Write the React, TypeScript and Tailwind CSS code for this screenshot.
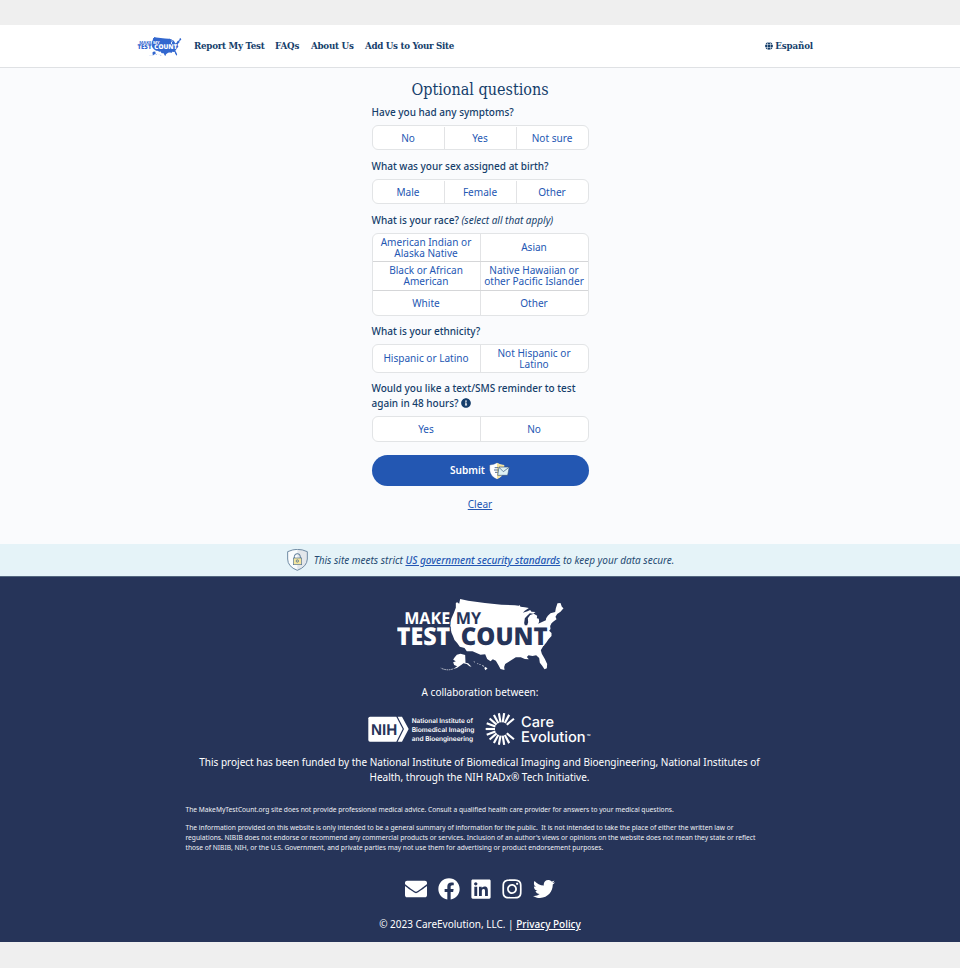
import React from "react";
import { FaEnvelope, FaFacebook, FaLinkedin, FaInstagram, FaTwitter, FaGlobe, FaInfoCircle } from "react-icons/fa";

const SANS = "font-['Noto_Sans',sans-serif]";
const SLAB = "font-['DejaVu_Serif_Condensed','DejaVu_Serif',serif] [font-stretch:condensed]";

function MapLogo({ className, ink, paper }: { className: string; ink: string; paper: string }) {
  const text = { fontFamily: "'Open Sans', sans-serif", strokeLinejoin: "round" as const, paintOrder: "stroke", textRendering: "geometricPrecision" as const };
  return (
    <svg className={className} viewBox="37 26 500 216" aria-label="Make My Test Count">
      <path
        fill={ink}
        d="M213 38L217 36L223 40L226 26L250 31L300 38L350 43L390 45L402 46L404 44L407 49L420 51L432 53L420 61L414 67L428 63L436 59L440 64L452 65L445 70L435 69L427 76L420 84L418 98L420 105L427 105L430 96L429 84L436 74L447 70L457 76L456 84L462 85L463 94L460 100L470 96L483 90L484 84L489 76L497 69L511 65L513 54L518 39L527 38L531 49L536 54L527 64L517 71L512 79L515 87L505 94L500 99L496 107L497 116L493 121L500 128L500 137L491 147L484 157L475 168L468 180L471 190L480 206L487 221L486 234L479 237L472 226L465 217L463 203L454 195L443 197L431 195L426 200L432 207L420 206L408 201L393 201L380 209L361 221L358 230L359 239L347 236L341 225L333 211L324 207L317 213L307 206L301 192L287 193L263 183L246 183L239 173L225 169L217 158L209 149L204 136L200 127L197 113L196 98L200 84L207 68L213 52Z"
      />
      <path
        fill={ink}
        d="M208 203L216 193L227 190L241 194L242 217L250 219L260 229L254 228L246 221L236 219L228 225L216 233L205 236L217 228L208 224L205 216L213 213L205 208Z"
      />
      <path fill="none" stroke={ink} strokeWidth="2" strokeDasharray="5 2" d="M204 236Q185 242 168 233" />
      <path fill={ink} d="M266 213l4 1-1 3zM276 218l5 2-2 2zM283 221l6 2-4 1zM291 224l7 3-3 2zM300 229l8 5-6 6-3-5z" />
      <g {...text} fontWeight="700">
        <text x="58" y="101" fontSize="49" textLength="138" lengthAdjust="spacingAndGlyphs" fill={ink} stroke={paper} strokeWidth="6">MAKE</text>
        <text x="213" y="101" fontSize="49" textLength="76" lengthAdjust="spacingAndGlyphs" fill={paper}>MY</text>
      </g>
      <g {...text} fontWeight="800">
        <text x="36" y="164" fontSize="74" textLength="160" lengthAdjust="spacingAndGlyphs" fill={ink} stroke={paper} strokeWidth="6">TEST</text>
        <text x="228" y="164" fontSize="74" textLength="260" lengthAdjust="spacingAndGlyphs" fill={paper} stroke={ink} strokeWidth="6">COUNT</text>
      </g>
    </svg>
  );
}

function SubmitIcon() {
  return (
    <svg className="h-[18px] w-[21px]" viewBox="0 0 63 54">
      <path d="M2 9Q16 8 24 2Q33 8 46 9V25Q44 43 24 52Q4 43 2 25Z" fill="#fff" stroke="#34507a" strokeWidth="1" />
      <path d="M24 3Q33 8 45 10V25Q43 42 24 51Z" fill="#f5e39b" />
      <path d="M17 17h10M15 24h12M18 31h8" stroke="#34507a" strokeWidth="2.5" />
      <path d="M30 15H61L56 40H26Z" fill="#def2f5" stroke="#34507a" strokeWidth="2" />
      <path d="M30 16L43 29L60 16" fill="none" stroke="#34507a" strokeWidth="2" />
    </svg>
  );
}

function LockShield() {
  return (
    <svg className="h-[22px] w-[21px]" viewBox="0 0 63 66">
      <path d="M2 8Q18 1 31 1Q46 1 61 8V30Q60 53 31 64Q2 53 2 30Z" fill="#fafcfd" />
      <path d="M31 1Q46 1 61 8V30Q60 53 31 64Z" fill="#e3e7eb" />
      <path d="M2 8Q18 1 31 1Q46 1 61 8V30Q60 53 31 64Q2 53 2 30Z" fill="none" stroke="#557593" strokeWidth="2.5" />
      <path d="M22 28V23Q22 14 31 14Q40 14 40 23V28" fill="none" stroke="#557593" strokeWidth="3" />
      <rect x="19" y="27" width="25" height="20" fill="#f4e59e" stroke="#557593" strokeWidth="2" />
      <circle cx="31" cy="36" r="3.5" fill="none" stroke="#557593" strokeWidth="2.5" />
    </svg>
  );
}

function NihLogo() {
  const lines = ["National Institute of", "Biomedical Imaging", "and Bioengineering"];
  const widths = [184, 188, 184];
  return (
    <svg className="h-[27px] w-[108px]" viewBox="26 34 324 81" aria-label="NIH">
      <path d="M32 36H111L130 73L111 111H32Q27 111 27 106V41Q27 36 32 36Z" fill="#fff" />
      <path d="M115 36H128L148 73L128 111H115L134 73Z" fill="#fff" />
      <text x="35" y="90" fontSize="47" fontWeight="700" textLength="79" lengthAdjust="spacingAndGlyphs" fill="#263459" fontFamily="'Liberation Sans', sans-serif" textRendering="geometricPrecision">NIH</text>
      {lines.map((line, i) => (
        <text key={line} x="157" y={54 + i * 27} fontSize="19.5" fontWeight="600" textLength={widths[i]} lengthAdjust="spacingAndGlyphs" fill="#fff" fontFamily="Inter, sans-serif" textRendering="geometricPrecision">{line}</text>
      ))}
    </svg>
  );
}

const RAYS = [40, 62, 81, 100, 119, 139, 159, 180, 201, 221, 241, 260, 279, 298, 320];

function CareLogo() {
  return (
    <svg className="h-[34px] w-[106px]" viewBox="376 24 318 102" aria-label="Care Evolution">
      {RAYS.map((deg) => {
        const a = (deg * Math.PI) / 180;
        return (
          <line key={deg} x1={426 + 20 * Math.cos(a)} y1={75 - 20 * Math.sin(a)} x2={426 + 48 * Math.cos(a)} y2={75 - 48 * Math.sin(a)} stroke="#fff" strokeWidth="6.5" />
        );
      })}
      <g fill="#fff" fontFamily="Inter, sans-serif" fontWeight="500" fontSize="44" textRendering="geometricPrecision">
        <text x="484" y="68" textLength="99" lengthAdjust="spacingAndGlyphs">Care</text>
        <text x="484" y="115" textLength="194" lengthAdjust="spacingAndGlyphs">Evolution</text>
        <text x="681" y="96" fontSize="8" textLength="11">TM</text>
      </g>
    </svg>
  );
}

function Row({ items, height, last = true }: { items: string[][]; height: string; last?: boolean }) {
  return (
    <div className={`flex ${height} ${last ? "" : "border-b border-[#d5d6d8]"}`}>
      {items.map((lines, i) => (
        <button
          key={lines[0]}
          className={`flex flex-1 basis-0 flex-col items-center justify-center whitespace-nowrap text-[10.05px] leading-[11px] text-[#2457b3] ${i > 0 ? "border-l border-[#e2e3e5]" : ""}`}
        >
          {lines.map((l) => (
            <span key={l}>{l}</span>
          ))}
        </button>
      ))}
    </div>
  );
}

function Group({ className, children }: { className: string; children: React.ReactNode }) {
  return <div className={`overflow-hidden rounded-[6px] border border-[#e2e4e6] bg-white ${className}`}>{children}</div>;
}

function Question({ children, className }: { children: React.ReactNode; className: string }) {
  return <div className={`whitespace-nowrap text-[10px] leading-[15px] font-medium text-[#153e6b] ${className}`}>{children}</div>;
}

export default function App() {
  return (
    <div className={`flex h-[968px] w-[960px] flex-col overflow-hidden bg-[#efefef] pt-[25px] ${SANS}`}>
      <header className="flex h-[43px] shrink-0 items-center border-b border-[#dfe1e4] bg-white pr-[147px] pl-[137px]">
        <MapLogo className="h-[19px] w-[45px]" ink="#3267cf" paper="#ffffff" />
        <nav className={`ml-3 flex gap-[11px] text-[9.7px] font-bold whitespace-nowrap text-[#153e6b] ${SLAB}`}>
          <a className="w-[70px] tracking-[-0.25px]">Report My Test</a>
          <a className="w-[25px] tracking-[-0.2px]">FAQs</a>
          <a className="w-[43px] tracking-[-0.25px]">About Us</a>
          <a className="tracking-[-0.3px]">Add Us to Your Site</a>
        </nav>
        <div className={`ml-auto flex items-center gap-[2px] text-[9.7px] font-bold tracking-[-0.15px] text-[#153e6b] ${SLAB}`}>
          <FaGlobe className="size-[8px]" />
          <span>Español</span>
        </div>
      </header>

      <main className="flex h-[476px] shrink-0 flex-col items-center bg-[#fafbfd]">
        <h1 className={`mt-[12px] h-[19px] text-[16px] leading-[20px] whitespace-nowrap text-[#153e6b] ${SLAB}`}>Optional questions</h1>
        <form className="flex w-[217px] flex-col">
          <Question className="mt-[6px]">Have you had any symptoms?</Question>
          <Group className="mt-[5px] h-[25px]">
            <Row height="h-full pt-px" items={[["No"], ["Yes"], ["Not sure"]]} />
          </Group>
          <Question className="mt-[9px]">What was your sex assigned at birth?</Question>
          <Group className="mt-[5px] h-[25px]">
            <Row height="h-full pt-px" items={[["Male"], ["Female"], ["Other"]]} />
          </Group>
          <Question className="mt-[9px]">
            What is your race? <em className="font-normal">(select all that apply)</em>
          </Question>
          <Group className="mt-[5px] h-[83px]">
            <Row height="h-[28px]" last={false} items={[["American Indian or", "Alaska Native"], ["Asian"]]} />
            <Row height="h-[29px]" last={false} items={[["Black or African", "American"], ["Native Hawaiian or", "other Pacific Islander"]]} />
            <Row height="h-[24px]" items={[["White"], ["Other"]]} />
          </Group>
          <Question className="mt-[8px]">What is your ethnicity?</Question>
          <Group className="mt-[5px] h-[29px]">
            <Row height="h-full" items={[["Hispanic or Latino"], ["Not Hispanic or", "Latino"]]} />
          </Group>
          <Question className="mt-[8px]">
            Would you like a text/SMS reminder to test
            <br />
            again in 48 hours? <FaInfoCircle className="inline size-[10px] align-[-1px]" />
          </Question>
          <Group className="mt-[5px] h-[26px]">
            <Row height="h-full" items={[["Yes"], ["No"]]} />
          </Group>
          <button className="mt-[13px] flex h-[31px] items-center justify-center gap-[4px] rounded-full bg-[#2357b2] text-[10.1px] font-semibold text-white">
            Submit <SubmitIcon />
          </button>
          <a className="mt-[11px] self-center text-[10.1px] leading-[15px] text-[#2457b3] underline">Clear</a>
        </form>
      </main>

      <section className="flex h-[32px] shrink-0 items-center justify-center gap-[6px] bg-[#e5f3f8] pl-px text-[10px] whitespace-nowrap text-[#254b73] italic">
        <LockShield />
        <span className="pt-px">
          This site meets strict <a className="font-medium text-[#2457b3] underline">US government security standards</a> to keep your data secure.
        </span>
      </section>

      <footer className="flex h-[366px] shrink-0 flex-col items-center border-t border-[#53677f] bg-[#263459] text-[10px] leading-[15px] text-white">
        <MapLogo className="mt-[22px] h-[72px] w-[167px]" ink="#ffffff" paper="#263459" />
        <p className="mt-[14px] whitespace-nowrap">A collaboration between:</p>
        <div className="mt-[12px] flex items-center gap-[9px] pr-px">
          <NihLogo />
          <CareLogo />
        </div>
        <p className="mt-[9px] pr-px text-center whitespace-nowrap">
          This project has been funded by the National Institute of Biomedical Imaging and Bioengineering, National Institutes of
          <br />
          Health, through the NIH RADx® Tech Initiative.
        </p>
        <div className="mt-[20px] w-[589px] text-[6.67px] leading-[10px] whitespace-nowrap text-[#eef0f4]">
          <p>The MakeMyTestCount.org site does not provide professional medical advice. Consult a qualified health care provider for answers to your medical questions.</p>
          <p className="mt-[8px]">
            The information provided on this website is only intended to be a general summary of information for the public.&nbsp; It is not intended to take the place of either the written law or
            <br />
            regulations. NIBIB does not endorse or recommend any commercial products or services. Inclusion of an author's views or opinions on the website does not mean they state or reflect
            <br />
            those of NIBIB, NIH, or the U.S. Government, and private parties may not use them for advertising or product endorsement purposes.
          </p>
        </div>
        <div className="mt-[25px] flex h-[22px] items-center gap-[11px]">
          <FaEnvelope className="size-[22px]" />
          <FaFacebook className="size-[22px]" />
          <FaLinkedin className="h-[22px] w-[20px]" />
          <FaInstagram className="h-[22px] w-[20px]" />
          <FaTwitter className="size-[22px]" />
        </div>
        <p className="mt-[17px] whitespace-nowrap">
          © 2023 CareEvolution, LLC. | <a className="font-medium underline">Privacy Policy</a>
        </p>
      </footer>
    </div>
  );
}
